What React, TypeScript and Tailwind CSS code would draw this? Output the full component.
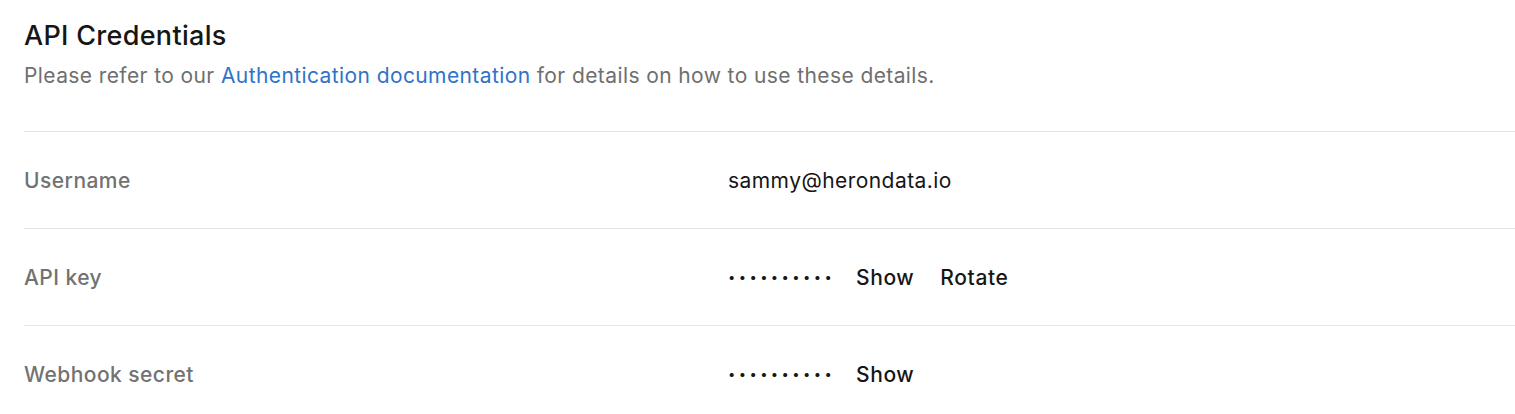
const rows = [
  { label: "Username", kind: "text" as const, value: "sammy@herondata.io" },
  { label: "API key", kind: "secret" as const, actions: ["Show", "Rotate"] },
  { label: "Webhook secret", kind: "secret" as const, actions: ["Show"] },
];

export default function App() {
  return (
    <div className="min-h-screen bg-white pl-6 font-['Inter','Liberation_Sans',sans-serif] antialiased">
      <div className="pt-[19px]">
        <h2 className="text-[27px] font-medium leading-[34px] tracking-[0.3px] text-[#161616]">API Credentials</h2>
        <p className="mt-[9px] text-[21px] leading-[28px] tracking-[0.4px] text-[#6f6f6f]">
          Please refer to our{" "}
          <a href="#" className="text-[#2f73c9]">
            Authentication documentation
          </a>{" "}
          for details on how to use these details.
        </p>
      </div>
      <div className="mt-[41px]">
        {rows.map((row) => (
          <div
            key={row.label}
            className="grid h-[97px] grid-cols-[704px_1fr] items-center border-t border-[#e5e5e5] pt-[1px] text-[21px] tracking-[0.45px]"
          >
            <div className="font-medium text-[#727272]">{row.label}</div>
            {row.kind === "text" ? (
              <div className="text-[#161616]">{row.value}</div>
            ) : (
              <div className="flex items-center text-[#161616]">
                <span className="w-[128px] text-[13px] tracking-[3.4px]">••••••••••</span>
                <div className="flex items-center gap-[26px]">
                  {row.actions.map((a) => (
                    <button key={a} type="button" className="font-medium tracking-[0.6px] text-[#161616]">
                      {a}
                    </button>
                  ))}
                </div>
              </div>
            )}
          </div>
        ))}
      </div>
    </div>
  );
}
